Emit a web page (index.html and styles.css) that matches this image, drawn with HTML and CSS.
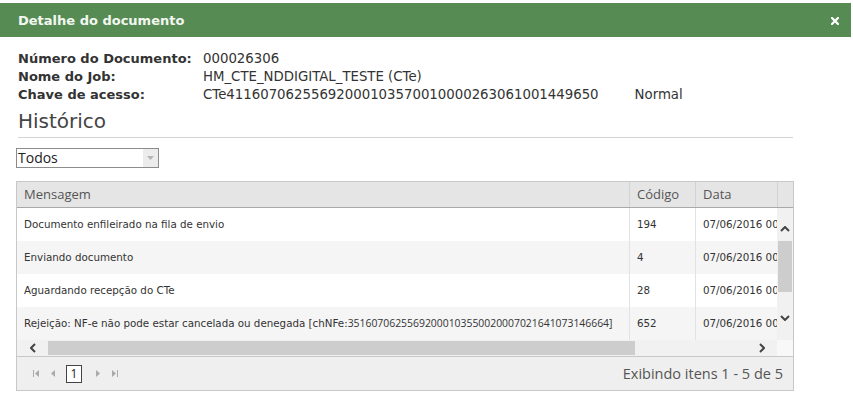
FILE: index.html
```html
<!DOCTYPE html>
<html>

<head>
    <title>Detalhe do documento</title>
    <meta name="viewport" content="width=device-width, initial-scale=1" />
    <link rel="stylesheet" href="styles.css">
</head>

<body>
    <div class="window">
        <div class="titlebar">
            <span class="title">Detalhe do documento</span>
            <svg class="close" width="8" height="8" viewBox="0 0 8 8">
                <path d="M1 1 L7 7 M7 1 L1 7" stroke="#fff" stroke-width="2.2" stroke-linecap="square" />
            </svg>
        </div>
        <div class="content">
            <div class="info">
                <span class="label">Número do Documento:</span>
                <span class="value">000026306</span>
                <span class="label">Nome do Job:</span>
                <span class="value">HM_CTE_NDDIGITAL_TESTE (CTe)</span>
                <span class="label">Chave de acesso:</span>
                <span class="value">CTe41160706255692000103570010000263061001449650<span class="kind">Normal</span></span>
            </div>

            <h2>Histórico</h2>

            <div class="dropdown">
                <span class="dropdown-text">Todos</span>
                <span class="dropdown-arrow">
                    <svg width="7" height="4" viewBox="0 0 7 4"><path d="M0 0 L7 0 L3.5 4 Z" fill="#b5b5b5" /></svg>
                </span>
            </div>

            <div class="grid">
                <div class="grid-head">
                    <div class="th col-msg">Mensagem</div>
                    <div class="th col-code">Código</div>
                    <div class="th col-date">Data</div>
                    <div class="th col-pad"></div>
                </div>
                <div class="grid-body">
                    <div class="rows">
                        <div class="row">
                            <div class="td col-msg">Documento enfileirado na fila de envio</div>
                            <div class="td col-code">194</div>
                            <div class="td col-date">07/06/2016 00:00:12</div>
                        </div>
                        <div class="row alt">
                            <div class="td col-msg">Enviando documento</div>
                            <div class="td col-code">4</div>
                            <div class="td col-date">07/06/2016 00:00:15</div>
                        </div>
                        <div class="row">
                            <div class="td col-msg">Aguardando recepção do CTe</div>
                            <div class="td col-code">28</div>
                            <div class="td col-date">07/06/2016 00:00:18</div>
                        </div>
                        <div class="row alt">
                            <div class="td col-msg">Rejeição: NF-e não pode estar cancelada ou denegada [chNFe:<span class="digits">35160706255692000103550020007021641073146664]</span></div>
                            <div class="td col-code">652</div>
                            <div class="td col-date">07/06/2016 00:00:21</div>
                        </div>
                    </div>
                    <div class="vscroll">
                        <div class="vbtn up">
                            <svg width="10" height="6" viewBox="0 0 10 6"><path d="M1 5 L5 1 L9 5" fill="none" stroke="#444" stroke-width="2" /></svg>
                        </div>
                        <div class="vthumb"></div>
                        <div class="vspace"></div>
                        <div class="vbtn down">
                            <svg width="10" height="6" viewBox="0 0 10 6"><path d="M1 1 L5 5 L9 1" fill="none" stroke="#444" stroke-width="2" /></svg>
                        </div>
                    </div>
                </div>
                <div class="hscroll">
                    <div class="hbtn">
                        <svg width="6" height="10" viewBox="0 0 6 10"><path d="M5 1 L1 5 L5 9" fill="none" stroke="#444" stroke-width="2" /></svg>
                    </div>
                    <div class="hthumb"></div>
                    <div class="hspace"></div>
                    <div class="hbtn right">
                        <svg width="6" height="10" viewBox="0 0 6 10"><path d="M1 1 L5 5 L1 9" fill="none" stroke="#444" stroke-width="2" /></svg>
                    </div>
                    <div class="corner"></div>
                </div>
                <div class="pager">
                    <div class="pager-nav">
                        <svg class="nav" width="6" height="7" viewBox="0 0 6 7"><path d="M0 0 H1 V7 H0 Z M6 0 L2 3.5 L6 7 Z" fill="#aaa" /></svg>
                        <svg class="nav" width="4" height="7" viewBox="0 0 4 7"><path d="M4 0 L0 3.5 L4 7 Z" fill="#aaa" /></svg>
                        <span class="page">1</span>
                        <svg class="nav" width="4" height="7" viewBox="0 0 4 7"><path d="M0 0 L4 3.5 L0 7 Z" fill="#aaa" /></svg>
                        <svg class="nav" width="6" height="7" viewBox="0 0 6 7"><path d="M0 0 L4 3.5 L0 7 Z M5 0 H6 V7 H5 Z" fill="#aaa" /></svg>
                    </div>
                    <span class="pager-info">Exibindo itens 1 - 5 de 5</span>
                </div>
            </div>
        </div>
    </div>
</body>

</html>
```

FILE: styles.css
```css
body {
    margin: 0;
    font-family: "DejaVu Sans", Verdana, sans-serif;
    color: #333;
    background-color: #fff;
}

.window {
    width: 851px;
    margin-top: 3px;
}

.titlebar {
    height: 34px;
    background-color: #568c53;
    display: flex;
    align-items: center;
    justify-content: space-between;
    padding: 0 12px 0 18px;
}

.title {
    font-size: 13px;
    font-weight: bold;
    color: #f2f7f1;
}

.close {
    margin-top: 1px;
}

.content {
    width: 777px;
    padding-left: 16px;
}

.info {
    display: grid;
    grid-template-columns: 187px auto;
    margin-top: 13px;
    line-height: 18px;
    font-size: 13.3px;
}

.label {
    font-weight: bold;
    padding-left: 2px;
    font-size: 13px;
    color: #333;
}

.value {
    color: #333;
}

.kind {
    margin-left: 36px;
}

h2 {
    font-size: 20px;
    font-weight: normal;
    color: #444;
    margin: 4px 0 0 2px;
    padding-bottom: 3px;
    border-bottom: 1px solid #d4d4d4;
    line-height: 26px;
}

.dropdown {
    display: flex;
    width: 141px;
    height: 18px;
    margin-top: 10px;
    border: 1px solid #8c8c8c;
    font-family: "Open Sans", sans-serif;
    font-size: 14px;
    color: #222;
}

.dropdown-text {
    flex: 1;
    line-height: 18px;
    padding-left: 1px;
}

.dropdown-arrow {
    width: 15px;
    background-color: #ececec;
    display: flex;
    align-items: center;
    justify-content: center;
}

.grid {
    width: 776px;
    margin-top: 13px;
    border: 1px solid #c8c8c8;
}

.grid-head {
    display: flex;
    height: 25px;
    background-color: #e5e5e5;
    border-bottom: 1px solid #a8a8a8;
    font-family: "Open Sans", sans-serif;
    font-size: 13px;
    color: #555;
}

.th {
    line-height: 25px;
    padding-left: 7px;
    box-sizing: border-box;
}

.col-msg {
    width: 612px;
}

.col-code {
    width: 66px;
    border-left: 1px solid #d2d2d2;
}

.col-date {
    width: 82px;
    border-left: 1px solid #d2d2d2;
}

.col-pad {
    width: 16px;
    border-left: 1px solid #d2d2d2;
}

.grid-body {
    display: flex;
    height: 132px;
}

.rows {
    width: 760px;
}

.row {
    display: flex;
    height: 33px;
    background-color: #fff;
}

.row.alt {
    background-color: #f5f5f5;
}

.td {
    font-size: 10.3px;
    line-height: 33px;
    padding-left: 7px;
    box-sizing: border-box;
    white-space: nowrap;
    overflow: hidden;
    color: #333;
}

.td.col-code,
.td.col-date {
    border-left-color: #e2e2e2;
}

.digits {
    font-family: "Open Sans", sans-serif;
    font-size: 10.4px;
}

.vscroll {
    width: 16px;
    background-color: #f1f1f1;
    display: flex;
    flex-direction: column;
}

.vbtn {
    height: 33px;
    display: flex;
    justify-content: center;
}

.vbtn.up {
    align-items: flex-end;
    padding-bottom: 9px;
    box-sizing: border-box;
}

.vbtn.down {
    align-items: flex-start;
    padding-top: 8px;
    box-sizing: border-box;
}

.vthumb {
    height: 51px;
    margin: 0 1px;
    background-color: #cdcdcd;
}

.vspace {
    flex: 1;
}

.hscroll {
    display: flex;
    height: 16px;
    background-color: #f1f1f1;
}

.hbtn {
    width: 31px;
    display: flex;
    align-items: center;
    justify-content: center;
}

.hthumb {
    width: 587px;
    margin: 1px 0;
    background-color: #cdcdcd;
}

.hspace {
    flex: 1;
}

.corner {
    width: 16px;
    background-color: #f8f8f8;
}

.pager {
    display: flex;
    align-items: center;
    justify-content: space-between;
    height: 33px;
    background-color: #efefef;
    border-top: 1px solid #c8c8c8;
    padding: 0 10px 0 10px;
}

.pager-nav {
    display: flex;
    align-items: center;
}

.nav {
    margin: 0 6px;
}

.page {
    display: inline-block;
    width: 14px;
    height: 16px;
    line-height: 16px;
    text-align: center;
    border: 1px solid #444;
    background-color: #fff;
    font-family: "Open Sans", sans-serif;
    font-size: 12px;
    color: #222;
    margin: 0 8px 0 5px;
}

.pager-info {
    font-family: "Open Sans", sans-serif;
    font-size: 14.5px;
    color: #555;
}
```
